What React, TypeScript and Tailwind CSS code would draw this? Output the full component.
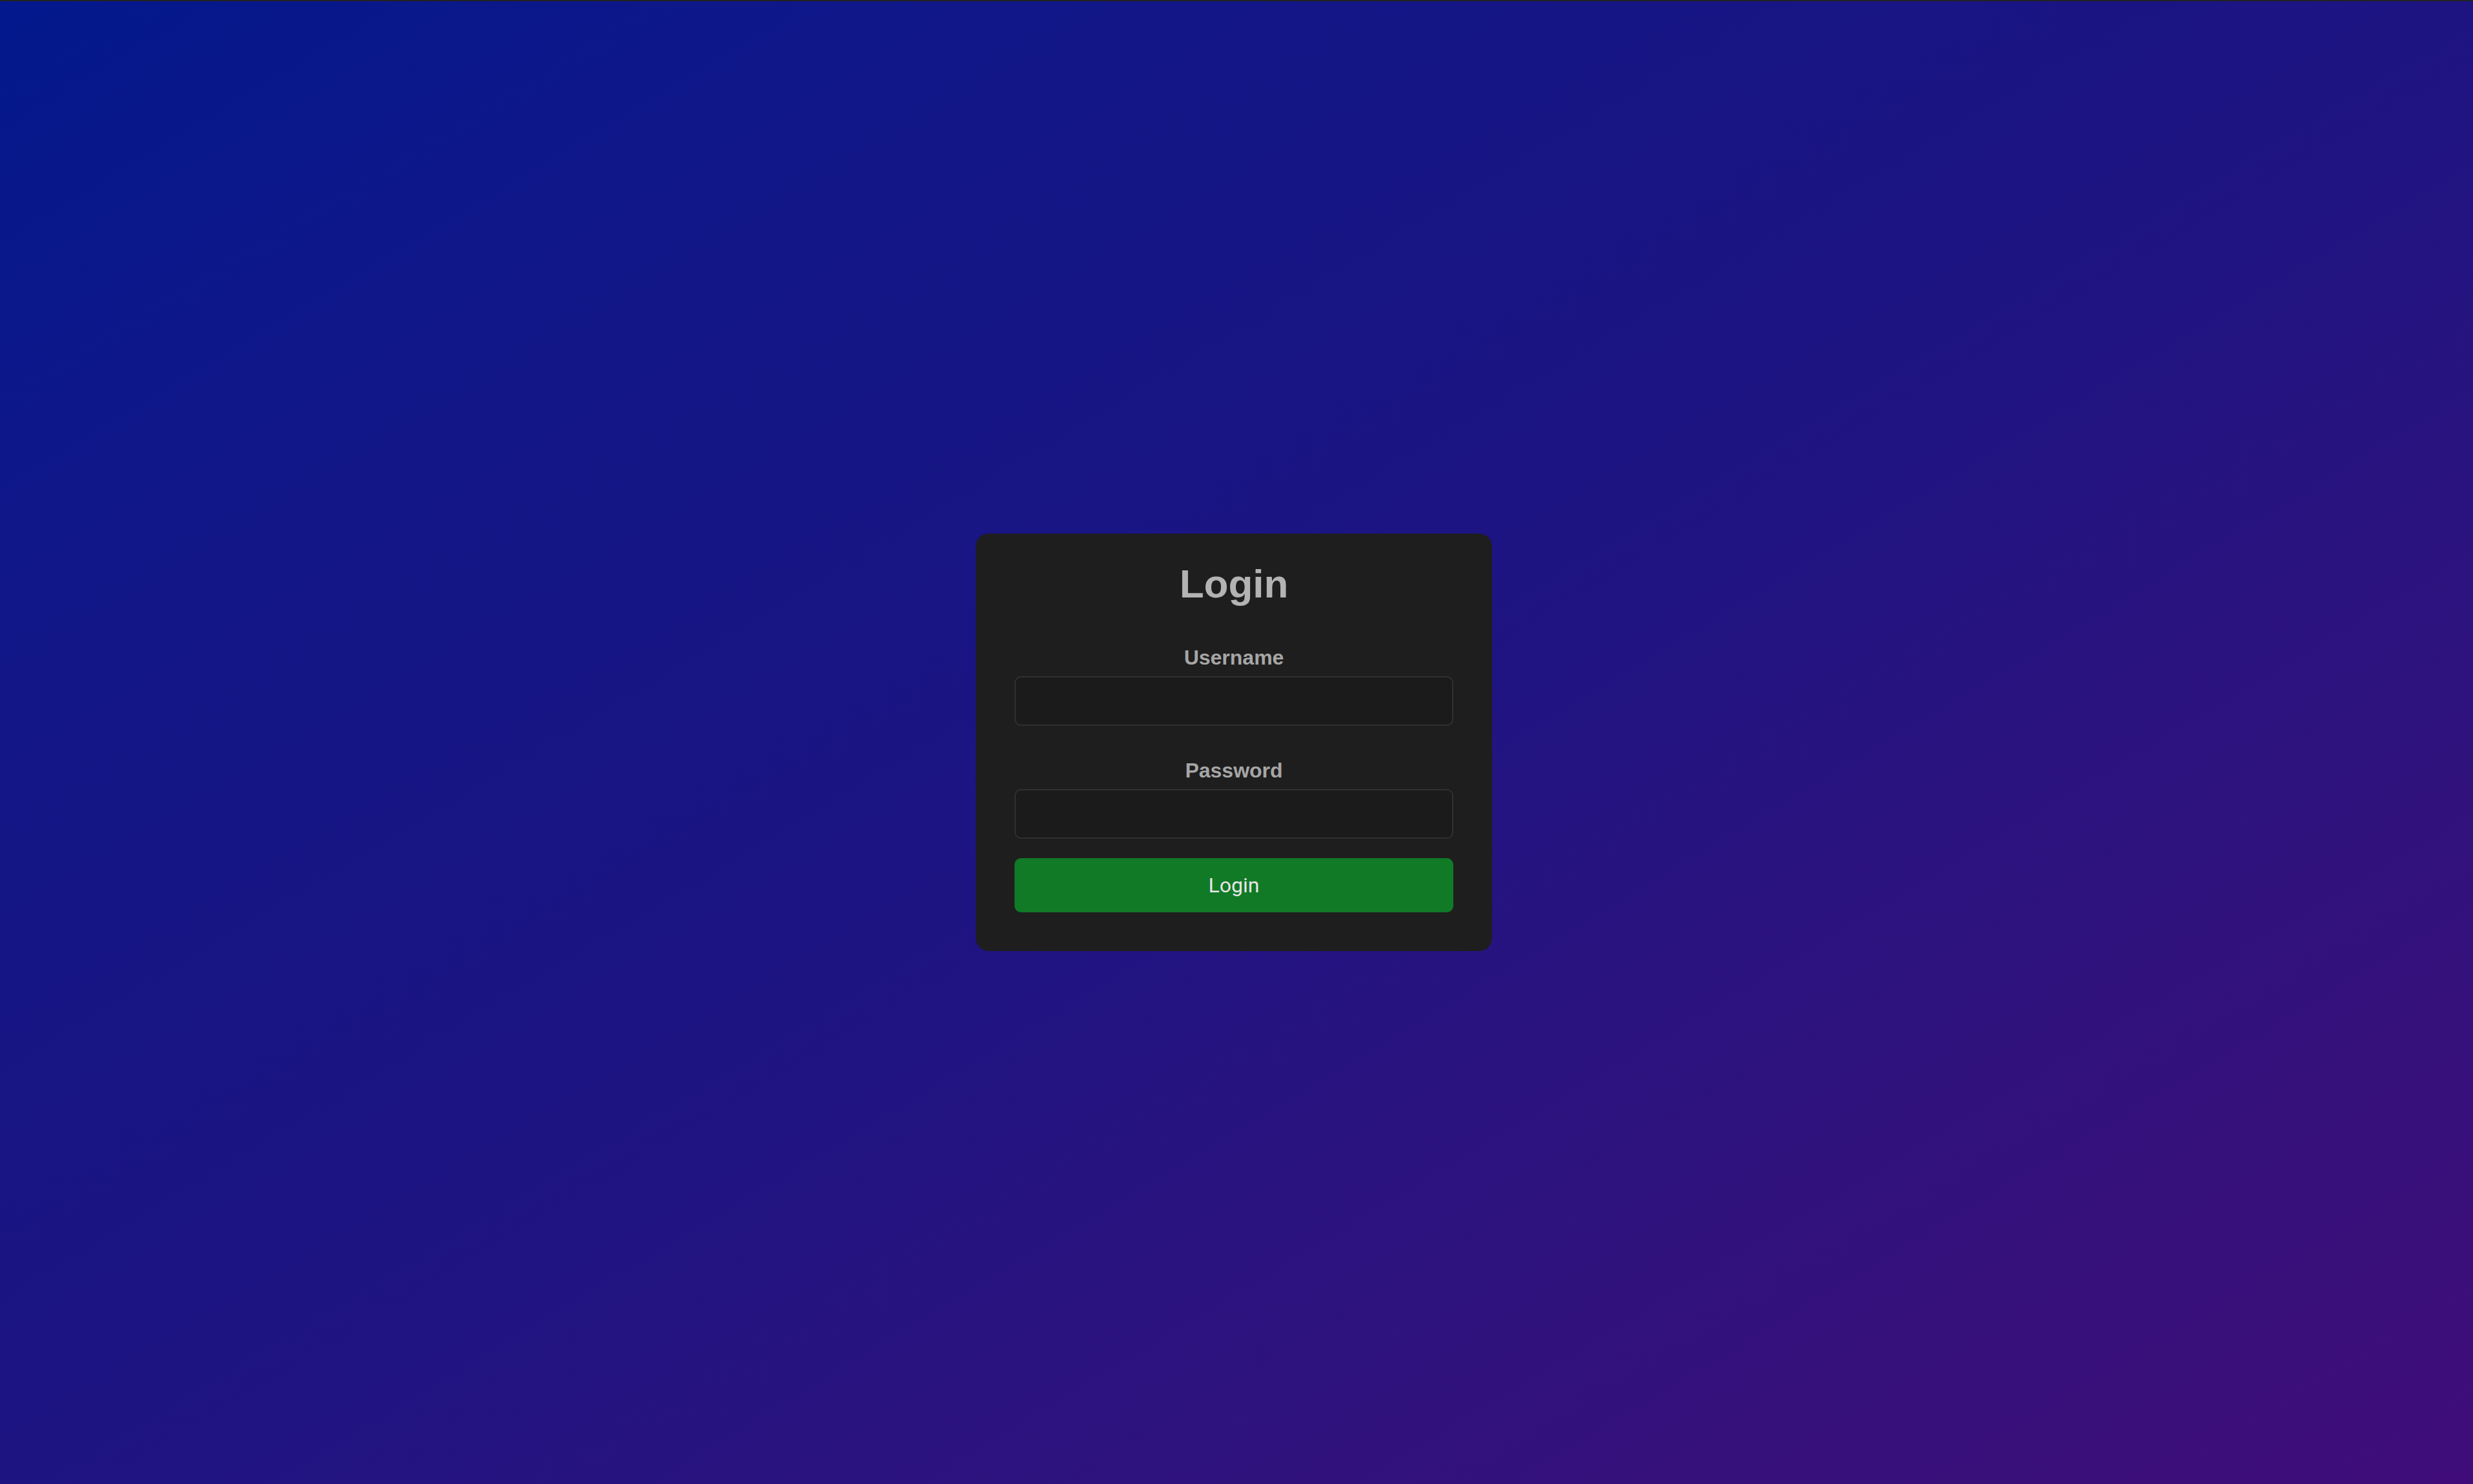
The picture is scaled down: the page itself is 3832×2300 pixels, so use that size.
import { useState } from "react";

export default function App() {
  const [username, setUsername] = useState("");
  const [password, setPassword] = useState("");

  return (
    <div className="flex flex-col w-full h-[2300px] bg-[#1e1e1e] font-['Liberation_Sans',Arial,sans-serif]">
      <div className="h-[2px] bg-[#222222]" />
      <div className="flex flex-1 items-center justify-center bg-linear-to-br from-[#02188c] via-[#1d1482] to-[#3f0c78]">
        <form
          className="flex flex-col w-[800px] pt-[42px] px-[60px] pb-[60px] rounded-[20px] bg-[#1e1e1e] mt-[-2px] ml-[-8px]"
          onSubmit={(e) => e.preventDefault()}
        >
          <h2 className="text-center text-[62px] leading-[72px] font-bold text-[#b3b3b3] mb-[58px]">
            Login
          </h2>
          <label className="text-center text-[32px] leading-[40px] font-bold text-[#a6a6a6] mb-[9px]">
            Username
          </label>
          <input
            type="text"
            value={username}
            onChange={(e) => setUsername(e.target.value)}
            className="h-[77px] rounded-[10px] border-2 border-[#303030] bg-[#1b1b1b] px-4 text-[30px] text-[#ddd] outline-none mb-[49px]"
          />
          <label className="text-center text-[32px] leading-[40px] font-bold text-[#a6a6a6] mb-[9px]">
            Password
          </label>
          <input
            type="password"
            value={password}
            onChange={(e) => setPassword(e.target.value)}
            className="h-[77px] rounded-[10px] border-2 border-[#303030] bg-[#1b1b1b] px-4 text-[30px] text-[#ddd] outline-none mb-[30px]"
          />
          <button
            type="submit"
            className="h-[84px] rounded-[10px] bg-[#117a27] text-[32px] text-[#e6e6e6] font-['Roboto',sans-serif] cursor-pointer"
          >
            Login
          </button>
        </form>
      </div>
    </div>
  );
}
